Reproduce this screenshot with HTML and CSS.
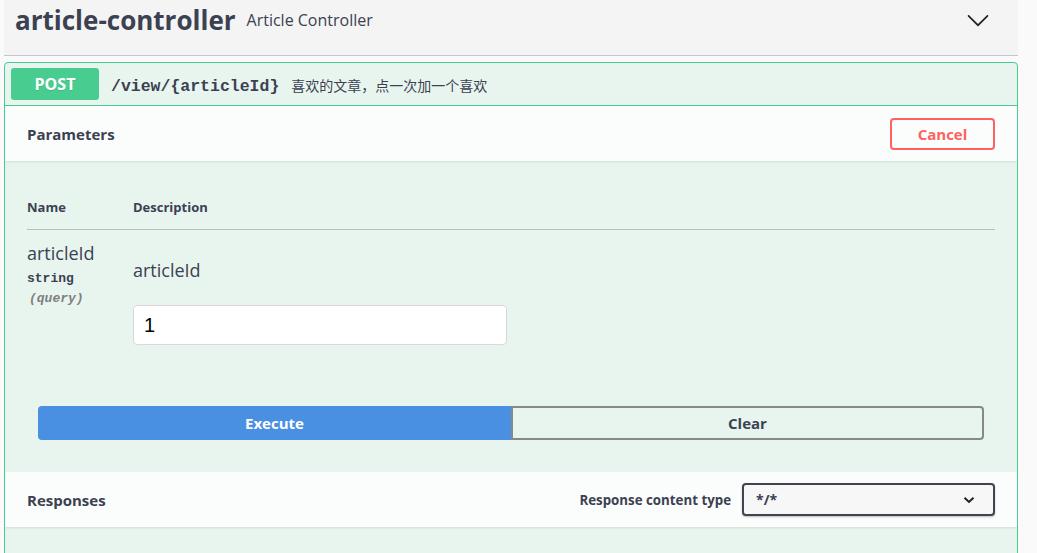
FILE: index.html
```html
<!DOCTYPE html>
<html lang="zh">
<head>
<meta charset="utf-8">
<title>article-controller</title>
<link rel="stylesheet" href="styles.css">
</head>
<body>
<div class="wrap">
  <div class="tag">
    <div class="tag-row">
      <span class="tag-title">article-controller</span>
      <span class="tag-desc">Article Controller</span>
      <span class="tag-spacer"></span>
      <svg class="tag-arrow" width="24" height="24" viewBox="0 0 20 20"><path d="M17.418 6.109c.272-.268.709-.268.979 0s.271.701 0 .969l-7.908 7.83c-.27.268-.707.268-.979 0l-7.908-7.830c-.27-.268-.27-.701 0-.969.271-.268.709-.268.979 0L10 13.25l7.418-7.141z" fill="#222"/></svg>
    </div>
  </div>

  <div class="opblock">
    <div class="summary">
      <span class="method">POST</span>
      <span class="path">/view/{articleId}</span>
      <span class="summary-desc">喜欢的文章，点一次加一个喜欢</span>
    </div>

    <div class="section-header">
      <span class="section-title">Parameters</span>
      <button class="btn-cancel">Cancel</button>
    </div>

    <div class="table-container">
      <div class="thead">
        <div class="col-name">Name</div>
        <div class="col-desc">Description</div>
      </div>
      <div class="trow">
        <div class="col-name">
          <div class="param-name">articleId</div>
          <div class="param-type">string</div>
          <div class="param-in">(query)</div>
        </div>
        <div class="col-desc">
          <div class="param-desc">articleId</div>
          <input class="param-input" type="text" value="1">
        </div>
      </div>
    </div>

    <div class="execute-wrapper">
      <button class="btn-execute">Execute</button>
      <button class="btn-clear">Clear</button>
    </div>

    <div class="section-header">
      <span class="section-title">Responses</span>
      <div class="media-type">
        <span class="media-label">Response content type</span>
        <div class="select">
          <span>*/*</span>
          <svg width="12" height="8" viewBox="0 0 12 8"><path d="M1.5 1.8 L6 6 L10.5 1.8" fill="none" stroke="#222" stroke-width="2"/></svg>
        </div>
      </div>
    </div>
  </div>
</div>
</body>
</html>
```

FILE: styles.css
```css
html, body {
  margin: 0;
  padding: 0;
}
body {
  background: #fafafa;
  font-family: "Open Sans", "Noto Sans CJK SC", sans-serif;
  color: #3b4151;
}
.wrap {
  margin-left: 4px;
  width: 1014px;
}
.tag {
  height: 56px;
  box-sizing: border-box;
  background: #f4f4f4;
  border-bottom: 1px solid #c6c7cb;
  padding: 0 28px 0 11px;
}
.tag-row {
  height: 39px;
  display: flex;
  align-items: center;
}
.tag-title {
  font-size: 26px;
  font-weight: 700;
  line-height: 32px;
}
.tag-desc {
  font-size: 16px;
  margin-left: 11px;
  margin-top: 1px;
  font-weight: 400;
}
.tag-spacer {
  flex: 1;
}
.tag-arrow {
  display: block;
  margin-top: 1px;
}
.opblock {
  margin-top: 6px;
  border: 1px solid #49cc90;
  border-radius: 4px;
  background: #e8f5ef;
  overflow: hidden;
  height: 600px;
}
.summary {
  display: flex;
  align-items: center;
  padding: 5px 5px 5px 6px;
  border-bottom: 1px solid #49cc90;
}
.method {
  width: 88px;
  height: 32px;
  border-radius: 3px;
  background: #49cc90;
  color: #fff;
  font-size: 16px;
  font-weight: 700;
  display: flex;
  align-items: center;
  justify-content: center;
  text-shadow: 0 1px 0 rgba(0,0,0,.1);
}
.path {
  margin-left: 12px;
  padding-top: 4px;
  font-family: "Liberation Mono", monospace;
  font-weight: 700;
  font-size: 16.5px;
}
.summary-desc {
  margin-left: 12px;
  padding-top: 2px;
  font-size: 14px;
  font-family: "Noto Sans CJK SC", sans-serif;
}
.section-header {
  height: 55px;
  box-sizing: border-box;
  padding: 0 22px;
  display: flex;
  align-items: center;
  justify-content: space-between;
  background: rgba(255,255,255,.8);
  box-shadow: 0 1px 2px rgba(0,0,0,.1);
}
.section-title {
  font-size: 15px;
  font-weight: 700;
}
.btn-cancel {
  width: 105px;
  height: 32px;
  border: 2px solid #ff6060;
  border-radius: 4px;
  background: transparent;
  color: #ff6060;
  font-family: "Open Sans", sans-serif;
  font-size: 15px;
  font-weight: 700;
  padding: 0;
}
.table-container {
  padding: 25px 22px 0;
}
.thead {
  display: flex;
  align-items: center;
  height: 44px;
  box-sizing: border-box;
  padding-bottom: 2px;
  border-bottom: 1px solid rgba(59,65,81,.3);
  font-size: 13px;
  font-weight: 700;
}
.col-name {
  width: 106px;
  flex: none;
}
.col-desc {
  flex: 1;
}
.trow {
  display: flex;
}
.param-name {
  margin-top: 12px;
  font-size: 18px;
  line-height: 22px;
}
.param-type {
  margin-top: 7px;
  font-family: "Liberation Mono", monospace;
  font-weight: 700;
  font-size: 13px;
  line-height: 16px;
}
.param-in {
  margin-top: 4px;
  font-family: "Liberation Mono", monospace;
  font-style: italic;
  font-weight: 700;
  font-size: 13px;
  line-height: 16px;
  color: #808080;
  padding-left: 2px;
}
.param-desc {
  margin-top: 29px;
  font-size: 18px;
  line-height: 22px;
}
.param-input {
  display: block;
  margin-top: 24px;
  width: 374px;
  height: 40px;
  box-sizing: border-box;
  border: 1px solid #d9d9d9;
  border-radius: 4px;
  background: #fff;
  padding: 0 10px;
  font-family: "Liberation Sans", sans-serif;
  font-size: 20px;
  color: #000;
  outline: none;
}
.execute-wrapper {
  display: flex;
  padding: 61px 33px 32px;
}
.execute-wrapper button {
  flex: 1;
  height: 34px;
  box-sizing: border-box;
  font-family: "Open Sans", sans-serif;
  font-size: 15px;
  font-weight: 700;
  padding: 0;
}
.btn-execute {
  background: #4990e2;
  border: 2px solid #4990e2;
  color: #fff;
  border-radius: 4px 0 0 4px;
}
.btn-clear {
  background: transparent;
  border: 2px solid #888;
  color: #3b4151;
  border-radius: 0 4px 4px 0;
}
.media-type {
  display: flex;
  align-items: center;
}
.media-label {
  font-size: 13.3px;
  font-weight: 700;
  margin-right: 11px;
}
.select {
  width: 253px;
  height: 33px;
  box-sizing: border-box;
  border: 2px solid #41444e;
  border-radius: 4px;
  background: #f7f7f7;
  display: flex;
  align-items: center;
  justify-content: space-between;
  padding: 0 18px 0 12px;
  font-size: 14px;
  font-weight: 700;
  box-shadow: 0 1px 2px rgba(0,0,0,.25);
}
```
